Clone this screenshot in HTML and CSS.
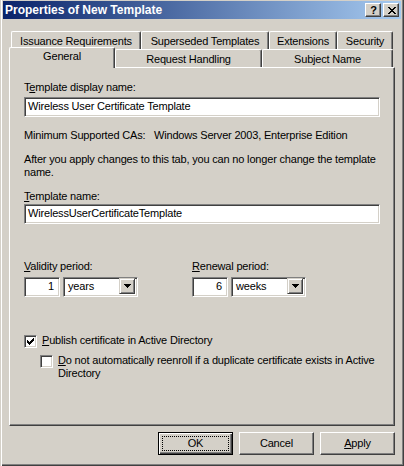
FILE: index.html
```html
<!DOCTYPE html>
<html>
<head>
<meta charset="utf-8">
<title>Properties of New Template</title>
<link rel="stylesheet" href="styles.css">
</head>
<body>
<div class="window">
  <div class="titlebar">
    <span class="title">Properties of New Template</span>
    <div class="caption-btns">
      <span class="cbtn help">?</span>
      <span class="cbtn close"><svg width="8" height="7" viewBox="0 0 8 7" shape-rendering="crispEdges"><path d="M0 0h2v1h-2zM6 0h2v1h-2zM1 1h2v1h-2zM5 1h2v1h-2zM2 2h4v1h-4zM3 3h2v1h-2zM2 4h4v1h-4zM1 5h2v1h-2zM5 5h2v1h-2zM0 6h2v1h-2zM6 6h2v1h-2z"/></svg></span>
    </div>
  </div>
  <div class="client">
    <div class="tabs">
      <div class="tabrow back">
        <div class="tab t-iss">Issuance Requirements</div>
        <div class="tab t-sup">Superseded Templates</div>
        <div class="tab t-ext">Extensions</div>
        <div class="tab t-sec">Security</div>
      </div>
      <div class="tabrow front">
        <div class="tab selected t-gen">General</div>
        <div class="tab t-req">Request Handling</div>
        <div class="tab t-sub">Subject Name</div>
      </div>
    </div>
    <div class="panel">
      <div class="label">T<u>e</u>mplate display name:</div>
      <div class="field wide first"><span>Wireless User Certificate Template</span></div>
      <div class="text mincas">Minimum Supported CAs:&nbsp;&nbsp; Windows Server 2003, Enterprise Edition</div>
      <div class="text after"><span class="line">After you apply changes to this tab, you can no longer change the template</span><span class="line">name.</span></div>
      <div class="label tname"><u>T</u>emplate name:</div>
      <div class="field wide second"><span>WirelessUserCertificateTemplate</span></div>
      <div class="periods">
        <div class="period">
          <div class="label"><u>V</u>alidity period:</div>
          <div class="period-ctrls">
            <div class="field num">1</div>
            <div class="field combo"><span class="combo-text">years</span><span class="dd"><svg width="7" height="4" viewBox="0 0 7 4" shape-rendering="crispEdges"><path d="M0 0h7v1h-7zM1 1h5v1h-5zM2 2h3v1h-3zM3 3h1v1h-1z"/></svg></span></div>
          </div>
        </div>
        <div class="period">
          <div class="label"><u>R</u>enewal period:</div>
          <div class="period-ctrls">
            <div class="field num">6</div>
            <div class="field combo"><span class="combo-text">weeks</span><span class="dd"><svg width="7" height="4" viewBox="0 0 7 4" shape-rendering="crispEdges"><path d="M0 0h7v1h-7zM1 1h5v1h-5zM2 2h3v1h-3zM3 3h1v1h-1z"/></svg></span></div>
          </div>
        </div>
      </div>
      <div class="check publish">
        <span class="box"><svg width="7" height="7" viewBox="0 0 7 7" shape-rendering="crispEdges"><path d="M6 0h1v3h-1zM5 1h1v3h-1zM4 2h1v3h-1zM3 3h1v3h-1zM2 4h1v3h-1zM1 3h1v3h-1zM0 2h1v3h-1z"/></svg></span>
        <span class="check-label"><u>P</u>ublish certificate in Active Directory</span>
      </div>
      <div class="check reenroll">
        <span class="box"></span>
        <span class="check-label"><span class="line"><u>D</u>o not automatically reenroll if a duplicate certificate exists in Active</span><span class="line">Directory</span></span>
      </div>
    </div>
    <div class="actions">
      <div class="btn default"><span class="focus">OK</span></div>
      <div class="btn">Cancel</div>
      <div class="btn"><u>A</u>pply</div>
    </div>
  </div>
</div>
</body>
</html>
```

FILE: styles.css
```css
* { box-sizing: border-box; }
html, body { margin: 0; padding: 0; }
body {
  width: 404px;
  height: 466px;
  overflow: hidden;
  background: #D4D0C8;
  color: #000;
  font-family: "Liberation Sans", Arial, sans-serif;
  font-size: 11px;
  line-height: 13px;
  letter-spacing: -0.18px;
}
u { text-decoration: underline; text-underline-offset: 1px; }
.line { display: block; white-space: nowrap; }

.window {
  width: 404px;
  height: 466px;
  display: flex;
  flex-direction: column;
  padding: 1px 3px 2px 3px;
  background: #D4D0C8;
  box-shadow: inset 1px 0 #D4D0C8, inset 2px 0 #fff, inset -1px -1px #404040, inset -2px -2px #808080;
}

.titlebar {
  flex: none;
  height: 18px;
  display: flex;
  align-items: center;
  justify-content: space-between;
  padding: 0 2px;
  background: linear-gradient(to right, #0A246A, #A6CAF0);
  color: #fff;
}
.title { font-weight: bold; font-size: 12px; letter-spacing: 0; }
.caption-btns { display: flex; gap: 2px; }
.cbtn {
  width: 16px;
  height: 14px;
  display: flex;
  align-items: center;
  justify-content: center;
  background: #D4D0C8;
  color: #000;
  border: 1px solid;
  border-color: #fff #404040 #404040 #fff;
  box-shadow: inset -1px -1px #808080;
}
.cbtn.help { font-weight: bold; font-size: 11px; line-height: 12px; padding-left: 1px; letter-spacing: 0; }
.cbtn.close svg { display: block; fill: #000; margin-left: 1px; }

.client {
  flex: 1;
  display: flex;
  flex-direction: column;
  padding: 0 6px;
}

.tabs { margin-top: 12px; display: flex; flex-direction: column; }
.tabrow { display: flex; height: 18px; align-items: flex-start; }
.tabrow.back { padding-left: 2px; }
.tab {
  height: 18px;
  padding-top: 3px;
  text-align: center;
  white-space: nowrap;
  background: #D4D0C8;
  border-top: 1px solid #fff;
  border-left: 1px solid #fff;
  border-right: 1px solid #404040;
  border-radius: 2px 2px 0 0;
  box-shadow: inset -1px 0 #808080;
}
.tab.selected {
  position: relative;
  z-index: 1;
  height: 21px;
  margin-top: -2px;
  padding-top: 2px;
}
.t-iss { width: 130px; }
.t-sup { width: 128px; }
.t-ext { width: 68px; }
.t-sec { width: 56px; }
.t-gen { width: 106px; }
.t-req { width: 147px; }
.t-sub { width: 131px; }

.panel {
  flex: none;
  height: 359px;
  border-top: 1px solid #fff;
  border-left: 1px solid #fff;
  border-right: 1px solid #404040;
  border-bottom: 1px solid #404040;
  box-shadow: inset -1px -1px #808080;
  padding: 13px 0 0 14px;
}

.label, .text { white-space: nowrap; }

.field {
  background: #fff;
  border: 1px solid;
  border-color: #808080 #fff #fff #808080;
  box-shadow: inset 1px 1px #404040, inset -1px -1px #D4D0C8;
  height: 20px;
  padding: 2px 3px 0 3px;
  white-space: nowrap;
}
.field.wide { width: 356px; }
.field.first { margin-top: 3px; }
.mincas { margin-top: 12px; }
.after { margin-top: 11px; }
.tname { margin-top: 11px; }
.field.second { margin-top: 1px; }

.periods { display: flex; margin-top: 36px; }
.period { width: 168px; }
.period-ctrls { display: flex; gap: 3px; margin-top: 4px; }
.field.num { width: 36px; text-align: right; padding-right: 5px; }
.field.combo {
  width: 75px;
  display: flex;
  justify-content: space-between;
  padding: 2px 2px 2px 4px;
}
.dd {
  width: 16px;
  height: 16px;
  margin-top: -2px;
  display: flex;
  align-items: center;
  justify-content: center;
  background: #D4D0C8;
  border: 1px solid;
  border-color: #D4D0C8 #404040 #404040 #D4D0C8;
  box-shadow: inset 1px 1px #fff, inset -1px -1px #808080;
}
.dd svg { display: block; fill: #000; }

.check { display: flex; align-items: flex-start; gap: 5px; }
.check .box {
  flex: none;
  width: 13px;
  height: 13px;
  background: #fff;
  border: 1px solid;
  border-color: #808080 #fff #fff #808080;
  box-shadow: inset 1px 1px #404040, inset -1px -1px #D4D0C8;
  display: flex;
  align-items: center;
  justify-content: center;
}
.check .box svg { display: block; fill: #000; }
.check-label { margin-top: -1px; }
.publish { margin-top: 38px; }
.reenroll { margin-top: 7px; padding-left: 16px; }

.actions {
  display: flex;
  justify-content: flex-end;
  gap: 6px;
  margin-top: 6px;
}
.btn {
  width: 75px;
  height: 23px;
  display: flex;
  align-items: center;
  justify-content: center;
  border: 1px solid;
  border-color: #fff #404040 #404040 #fff;
  box-shadow: inset -1px -1px #808080;
}
.btn.default {
  border: 1px solid #000;
  box-shadow: inset 1px 1px #fff, inset -1px -1px #404040, inset -2px -2px #808080;
  padding: 3px;
}
.btn .focus {
  flex: 1;
  align-self: stretch;
  display: flex;
  align-items: center;
  justify-content: center;
  border: 1px dotted #000;
}
```
